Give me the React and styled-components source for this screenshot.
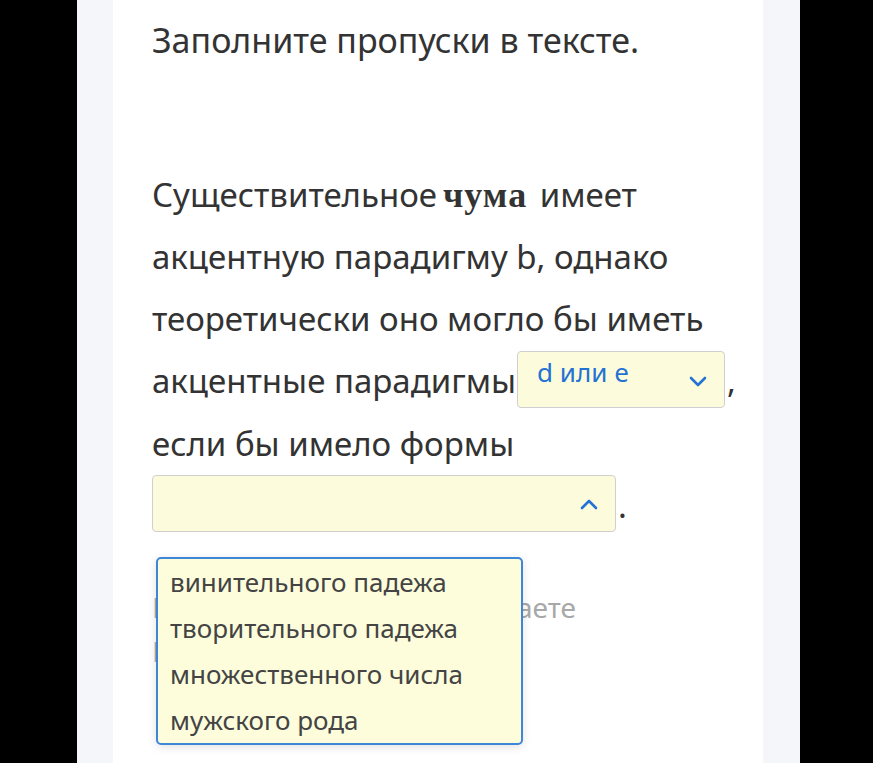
import React from 'react';
import styled, { createGlobalStyle } from 'styled-components';

const GlobalStyle = createGlobalStyle`
    html, body {
        margin: 0;
        padding: 0;
        background: #000;
    }
`;

const Frame = styled.div`
    width: 873px;
    height: 763px;
    overflow: hidden;
    display: flex;
    background: #000;
    padding-left: 77px;
    box-sizing: border-box;
`;

const Panel = styled.div`
    width: 723px;
    height: 100%;
    background: #f5f6fa;
    padding: 0 37px 0 36px;
    box-sizing: border-box;
`;

const Card = styled.div`
    position: relative;
    height: 100%;
    background: #fff;
    padding: 15px 0 0 39px;
    box-sizing: border-box;
    font-family: "Noto Sans", sans-serif;
    color: #333;
    white-space: nowrap;
`;

const Title = styled.h1`
    margin: 0;
    font-size: 34px;
    font-weight: 400;
    line-height: 50px;
`;

const Text = styled.p`
    margin: 99px 0 0;
    font-size: 33px;
    line-height: 62px;
`;

const Word = styled.b`
    font-family: "Liberation Serif", serif;
    font-size: 36px;
    letter-spacing: 1px;
    margin: 0 4px 0 6px;
`;

const Select = styled.span`
    display: inline-flex;
    align-items: center;
    justify-content: space-between;
    vertical-align: middle;
    box-sizing: border-box;
    width: ${p => p.$width}px;
    height: 57px;
    margin: -5px 2px 5px ${p => p.$gap || 0}px;
    padding: 0 17px 0 19px;
    background: #fcfcdc;
    border: 1px solid #cfcfcf;
    border-radius: 4px;
    color: #2372d4;
    font-size: 26px;
    line-height: 1;
`;

const Value = styled.span`
    margin-bottom: 14px;
`;

const Chevron = styled.svg`
    width: 18px;
    height: 11px;
    margin-top: ${p => p.$offset || 0}px;
    flex: none;
`;

const Menu = styled.ul`
    position: absolute;
    top: 557px;
    left: 43px;
    width: 367px;
    margin: 0;
    padding: 0;
    list-style: none;
    box-sizing: border-box;
    background: #fdfddc;
    border: 2px solid #3d86d8;
    border-radius: 5px;
    box-shadow: 0 2px 10px rgba(0, 0, 0, 0.12);
`;

const Option = styled.li`
    height: 46px;
    line-height: 46px;
    padding-left: 12px;
    font-size: 26px;
    color: #444;
`;

const Hint = styled.p`
    margin: 48px 0 0;
    font-size: 28px;
    line-height: 44px;
    color: #a8a8a8;
`;

const Arrow = ({ up, offset }) => (
    <Chevron viewBox="0 0 18 11" $offset={offset}>
        <polyline
            points={up ? '2,9 9,2 16,9' : '2,2 9,9 16,2'}
            fill="none"
            stroke="#2372d4"
            strokeWidth="2.6"
            strokeLinecap="round"
            strokeLinejoin="round"
        />
    </Chevron>
);

const options = [
    'винительного падежа',
    'творительного падежа',
    'множественного числа',
    'мужского рода',
];

const App = () => {
    return (
        <Frame>
            <GlobalStyle/>
            <Panel>
                <Card>
                    <Title>Заполните пропуски в тексте.</Title>
                    <Text>
                        Существительное<Word>чума</Word> имеет<br/>
                        акцентную парадигму b, однако<br/>
                        теоретически оно могло бы иметь<br/>
                        акцентные парадигмы
                        <Select $width={208} $gap={1}>
                            <Value>d или e</Value>
                            <Arrow offset={4}/>
                        </Select>
                        ,<br/>
                        если бы имело формы<br/>
                        <Select $width={464}>
                            <span/>
                            <Arrow up offset={2}/>
                        </Select>
                        .
                    </Text>
                    <Hint>
                        Выберите ответы, и вы узнаете<br/>
                        Проверить
                    </Hint>
                    <Menu>
                        {options.map(o => <Option key={o}>{o}</Option>)}
                    </Menu>
                </Card>
            </Panel>
        </Frame>
    );
};

export default App;
